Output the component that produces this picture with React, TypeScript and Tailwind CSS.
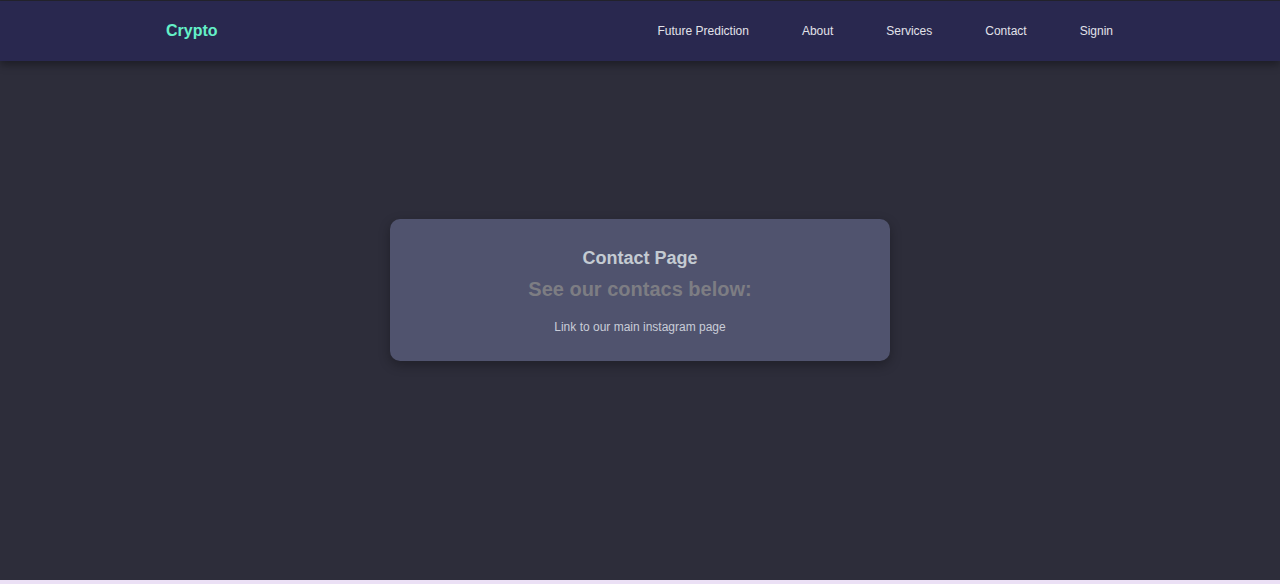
export default function App() {
  const links = ["Future Prediction", "About", "Services", "Contact", "Signin"];
  return (
    <div className="w-full bg-[#ebe0f5]" style={{ fontFamily: '"Liberation Sans", Arial, sans-serif' }}>
      <div className="h-[580px] bg-[#2d2d3a] flex flex-col">
        <div className="h-px bg-[#24242e]" />
        <nav className="h-[60px] bg-[#29284f] flex items-center justify-between pl-[166px] pr-[167px] shadow-[0_4px_8px_rgba(0,0,0,0.35)] relative z-10">
          <span className="text-[16px] font-bold text-[#64f0c8]">Crypto</span>
          <div className="flex items-center gap-[53px]">
            {links.map((l) => (
              <a key={l} className="text-[12px] text-[#e2e2ea]">{l}</a>
            ))}
          </div>
        </nav>
        <main className="flex-1 flex justify-center pt-[158px]">
          <div className="w-[500px] h-[142px] bg-[#50536e] rounded-[10px] shadow-[0_4px_12px_rgba(0,0,0,0.3)] flex flex-col items-center pt-[29px]">
            <h1 className="text-[18px] font-bold text-[#c4cbd2] leading-[20px]">Contact Page</h1>
            <h2 className="text-[20px] font-bold text-[#7d7d83] leading-[24px] mt-[9px]">See our contacs below:</h2>
            <p className="text-[12px] text-[#c9cdd8] mt-[19px] leading-[14px]">Link to our main instagram page</p>
          </div>
        </main>
      </div>
      <div className="h-[4px]" />
    </div>
  );
}
